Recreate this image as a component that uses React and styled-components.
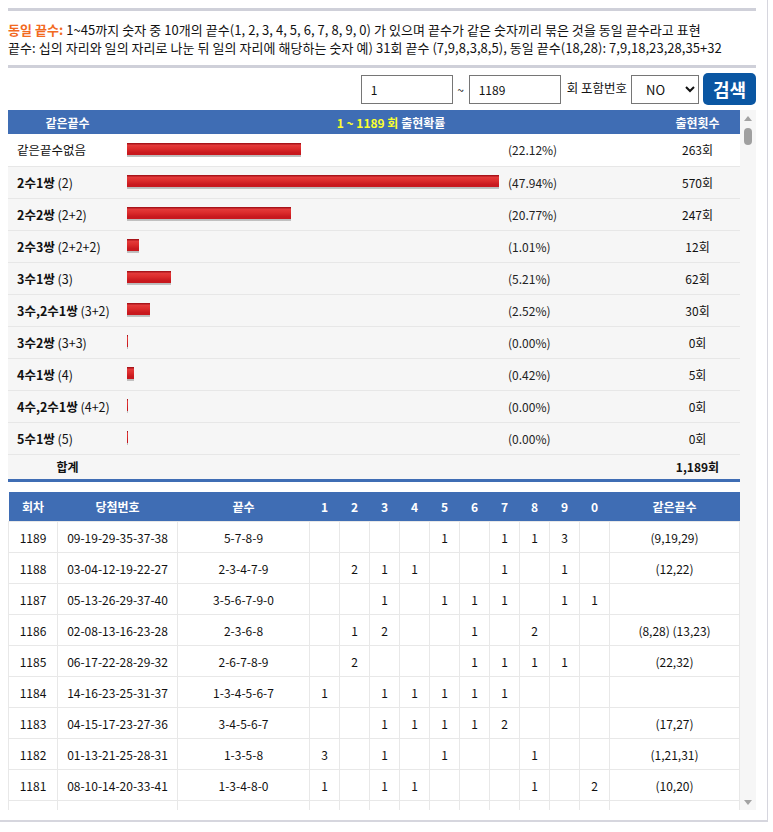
import React, { useState } from 'react';
import styled, { createGlobalStyle } from 'styled-components';

const GlobalStyle = createGlobalStyle`
  html, body {
    margin: 0;
    padding: 0;
    background: #fff;
  }
  body {
    font-family: 'Noto Sans CJK KR', 'Noto Sans', sans-serif;
    font-size: 12px;
    color: #111;
  }
  * {
    box-sizing: border-box;
  }
`;

const stats = [
  { name: '같은끝수없음', sub: '', pct: 22.12, count: '263' },
  { name: '2수1쌍', sub: '(2)', pct: 47.94, count: '570' },
  { name: '2수2쌍', sub: '(2+2)', pct: 20.77, count: '247' },
  { name: '2수3쌍', sub: '(2+2+2)', pct: 1.01, count: '12' },
  { name: '3수1쌍', sub: '(3)', pct: 5.21, count: '62' },
  { name: '3수,2수1쌍', sub: '(3+2)', pct: 2.52, count: '30' },
  { name: '3수2쌍', sub: '(3+3)', pct: 0, count: '0' },
  { name: '4수1쌍', sub: '(4)', pct: 0.42, count: '5' },
  { name: '4수,2수1쌍', sub: '(4+2)', pct: 0, count: '0' },
  { name: '5수1쌍', sub: '(5)', pct: 0, count: '0' },
];

const draws = [
  [1189, [9, 19, 29, 35, 37, 38]],
  [1188, [3, 4, 12, 19, 22, 27]],
  [1187, [5, 13, 26, 29, 37, 40]],
  [1186, [2, 8, 13, 16, 23, 28]],
  [1185, [6, 17, 22, 28, 29, 32]],
  [1184, [14, 16, 23, 25, 31, 37]],
  [1183, [4, 15, 17, 23, 27, 36]],
  [1182, [1, 13, 21, 25, 28, 31]],
  [1181, [8, 10, 14, 20, 33, 41]],
];

const DIGITS = [1, 2, 3, 4, 5, 6, 7, 8, 9, 0];
const THUMB = 17;

const pad = (n) => String(n).padStart(2, '0');

// 끝수별 개수, 끝수 문자열, 같은끝수 묶음 계산
function analyze(nums) {
  const counts = {};
  nums.forEach((n) => {
    const d = n % 10;
    counts[d] = (counts[d] || 0) + 1;
  });
  const ends = DIGITS.filter((d) => counts[d]).join('-');
  const seen = new Set();
  const groups = [];
  nums.forEach((n) => {
    const d = n % 10;
    if (seen.has(d)) return;
    seen.add(d);
    if (counts[d] > 1) groups.push('(' + nums.filter((x) => x % 10 === d).join(',') + ')');
  });
  return { counts, ends, same: groups.join(' ') };
}

function App() {
  const [ratio, setRatio] = useState(0);

  const onScroll = (e) => {
    const el = e.currentTarget;
    const max = el.scrollHeight - el.clientHeight;
    setRatio(max > 0 ? el.scrollTop / max : 0);
  };

  return (
    <>
      <GlobalStyle />
      <StPage>
        <StDivider />
        <StInfo>
          <p>
            <StInfoTitle>동일 끝수:</StInfoTitle> 1~45까지 숫자 중 10개의 끝수(1, 2, 3, 4, 5, 6, 7, 8, 9, 0) 가 있으며
            끝수가 같은 숫자끼리 묶은 것을 동일 끝수라고 표현
          </p>
          <p>
            끝수: 십의 자리와 일의 자리로 나눈 뒤 일의 자리에 해당하는 숫자 예) 31회 끝수 (7,9,8,3,8,5), 동일
            끝수(18,28): 7,9,18,23,28,35+32
          </p>
        </StInfo>
        <StDivider />

        <StSearchBar>
          <StInput defaultValue="1" />
          <StTilde>~</StTilde>
          <StInput defaultValue="1189" />
          <StLabel>회 포함번호</StLabel>
          <StSelect defaultValue="NO">
            <option value="NO">NO</option>
            <option value="YES">YES</option>
          </StSelect>
          <StSearchButton type="button">검색</StSearchButton>
        </StSearchBar>

        <StScrollArea>
          <StScrollContent onScroll={onScroll}>
            <StStatTable>
              <colgroup>
                <col style={{ width: 119 }} />
                <col style={{ width: 377 }} />
                <col style={{ width: 151 }} />
                <col />
              </colgroup>
              <thead>
                <tr>
                  <StStatHead>같은끝수</StStatHead>
                  <StStatHead colSpan={2}>
                    <StYellow>1 ~ 1189 회</StYellow> 출현확률
                  </StStatHead>
                  <StStatHead>출현횟수</StStatHead>
                </tr>
              </thead>
              <tbody>
                {stats.map((row, i) => (
                  <StStatRow key={row.name} first={i === 0}>
                    <StNameCell>
                      {row.sub ? <b>{row.name}</b> : row.name}
                      {row.sub && <StSub> {row.sub}</StSub>}
                    </StNameCell>
                    <StBarCell>
                      <StBar style={{ width: row.pct > 0 ? Math.round(row.pct * 7.68 + 4) : 1 }} />
                    </StBarCell>
                    <StPctCell>({row.pct.toFixed(2)}%)</StPctCell>
                    <StCountCell>{row.count}회</StCountCell>
                  </StStatRow>
                ))}
                <StSumRow>
                  <td>합계</td>
                  <td />
                  <td />
                  <td>1,189회</td>
                </StSumRow>
              </tbody>
            </StStatTable>

            <StDrawTable>
              <colgroup>
                <col style={{ width: 49 }} />
                <col style={{ width: 120 }} />
                <col style={{ width: 132 }} />
                {DIGITS.map((d) => (
                  <col key={d} style={{ width: 30 }} />
                ))}
                <col />
              </colgroup>
              <thead>
                <tr>
                  <StDrawHead>회차</StDrawHead>
                  <StDrawHead>당첨번호</StDrawHead>
                  <StDrawHead>끝수</StDrawHead>
                  {DIGITS.map((d) => (
                    <StDrawHead key={d}>{d}</StDrawHead>
                  ))}
                  <StDrawHead>같은끝수</StDrawHead>
                </tr>
              </thead>
              <tbody>
                {draws.map(([round, nums]) => {
                  const { counts, ends, same } = analyze(nums);
                  return (
                    <tr key={round}>
                      <StDrawCell>{round}</StDrawCell>
                      <StDrawCell>{nums.map(pad).join('-')}</StDrawCell>
                      <StDrawCell>{ends}</StDrawCell>
                      {DIGITS.map((d) => (
                        <StDrawCell key={d}>{counts[d] || ''}</StDrawCell>
                      ))}
                      <StDrawCell>{same}</StDrawCell>
                    </tr>
                  );
                })}
                <tr>
                  {Array.from({ length: 14 }, (_, i) => (
                    <StDrawCell key={i} />
                  ))}
                </tr>
              </tbody>
            </StDrawTable>
          </StScrollContent>

          <StScrollbar>
            <StArrow up />
            <StTrack>
              <StThumb style={{ top: `calc(${ratio} * (100% - ${THUMB}px))` }} />
            </StTrack>
            <StArrow />
          </StScrollbar>
        </StScrollArea>
      </StPage>
    </>
  );
}

const StPage = styled.div`
  width: 768px;
  height: 822px;
  padding: 8px 11px 10px 8px;
  border-right: 1px solid #d6d6de;
  border-bottom: 2px solid #d6d6de;
  display: flex;
  flex-direction: column;
`;

const StDivider = styled.div`
  height: 3px;
  flex-shrink: 0;
  background: #cfd0d9;
`;

const StInfo = styled.div`
  padding: 10px 0 8px;
  font-size: 13px;
  line-height: 18px;
  letter-spacing: 0.05px;
  white-space: nowrap;

  p {
    margin: 0;
  }
`;

const StInfoTitle = styled.b`
  color: #f26a1f;
`;

const StSearchBar = styled.div`
  margin-top: 5px;
  display: flex;
  justify-content: flex-end;
  align-items: center;
  height: 32px;
`;

const StInput = styled.input`
  width: 92px;
  height: 29px;
  border: 1px solid #767676;
  padding: 0 9px;
  font-family: inherit;
  font-size: 12px;
  color: #111;
  outline: none;
`;

const StTilde = styled.span`
  width: 16px;
  text-align: center;
  font-size: 12px;
`;

const StLabel = styled.span`
  margin: 0 4px 0 6px;
  font-size: 12.5px;
  position: relative;
  top: -2px;
`;

const StSelect = styled.select`
  width: 68px;
  height: 29px;
  border: 1px solid #767676;
  border-radius: 0;
  background: #fff;
  padding: 0 4px 0 10px;
  font-family: inherit;
  font-size: 13px;
  color: #111;
`;

const StSearchButton = styled.button`
  margin-left: 4px;
  width: 53px;
  height: 32px;
  border: none;
  border-radius: 5px;
  background: #0a56a2;
  color: #fff;
  font-family: inherit;
  font-size: 18px;
  font-weight: bold;
  padding: 0;
  cursor: pointer;
`;

const StScrollArea = styled.div`
  margin-top: 5px;
  flex: 1;
  min-height: 0;
  display: flex;
`;

const StScrollContent = styled.div`
  flex: 1;
  min-width: 0;
  overflow-y: auto;
  scrollbar-width: none;

  &::-webkit-scrollbar {
    display: none;
  }
`;

const StScrollbar = styled.div`
  width: 16px;
  flex-shrink: 0;
  background: #f6f6f6;
  display: flex;
  flex-direction: column;
`;

const StArrow = styled.div`
  height: 16px;
  display: flex;
  align-items: center;
  justify-content: center;

  &::before {
    content: '';
    border-left: 4px solid transparent;
    border-right: 4px solid transparent;
    ${(props) =>
      props.up ? 'border-bottom: 5px solid #a3a3a3;' : 'border-top: 5px solid #a3a3a3;'}
  }
`;

const StTrack = styled.div`
  flex: 1;
  position: relative;
  margin: 2px 0;
`;

const StThumb = styled.div`
  position: absolute;
  left: 4px;
  right: 4px;
  height: ${THUMB}px;
  border-radius: 4px;
  background: #a0a0a0;
`;

const StStatTable = styled.table`
  width: 100%;
  border-collapse: collapse;
  table-layout: fixed;
  border-bottom: 3px solid #3f6db4;
`;

const StStatHead = styled.th`
  height: 24px;
  padding: 0;
  background: #3f6db4;
  color: #fff;
  font-size: 12px;
  font-weight: bold;
  text-align: center;
`;

const StYellow = styled.span`
  color: #fbff2e;
`;

const StStatRow = styled.tr`
  height: 32px;
  background: ${(props) => (props.first ? '#fff' : '#f6f6f6')};
  border-bottom: 1px solid #e7e7e7;

  td {
    padding: 0;
    font-size: 12px;
  }
`;

const StNameCell = styled.td`
  && {
    padding-left: 9px;
    font-size: 12.5px;
  }
  white-space: nowrap;
`;

const StSub = styled.span`
  font-weight: normal;
`;

const StBarCell = styled.td`
  vertical-align: middle;
`;

const StBar = styled.div`
  height: 14px;
  background: linear-gradient(
    #a8141a 0,
    #a8141a 7%,
    #e43b3b 14%,
    #dc2c2c 40%,
    #c8181e 70%,
    #c8181e 84%,
    #b8b8b8 86%,
    #c4c4c4 100%
  );
`;

const StPctCell = styled.td`
  && {
    padding-left: 4px;
  }
  color: #222;
`;

const StCountCell = styled.td`
  text-align: center;
`;

const StSumRow = styled.tr`
  height: 26px;
  background: #f6f6f6;

  td {
    padding: 0;
    font-size: 12px;
    font-weight: bold;
    text-align: center;
  }
`;

const StDrawTable = styled.table`
  margin-top: 10px;
  width: 100%;
  border-collapse: collapse;
  table-layout: fixed;
`;

const StDrawHead = styled.th`
  height: 30px;
  padding: 0;
  background: #3f6db4;
  color: #fff;
  font-size: 12px;
  font-weight: bold;
  text-align: center;
`;

const StDrawCell = styled.td`
  height: 31px;
  padding: 0;
  border: 1px solid #e8e8e8;
  font-size: 12px;
  text-align: center;
  white-space: nowrap;
  color: #111;
`;

export default App;
